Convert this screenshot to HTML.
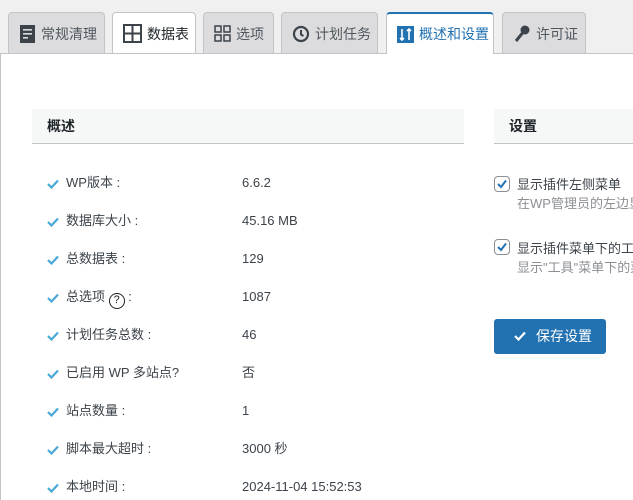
<!DOCTYPE html>
<html><head><meta charset="utf-8"><style>
*{box-sizing:border-box;margin:0;padding:0}
html,body{width:633px;height:500px;overflow:hidden}
body{background:#f0f0f1;font-family:"Liberation Sans","Noto Sans CJK SC",sans-serif;font-size:13px;color:#3c434a;position:relative}
.tab{position:absolute;top:12px;height:42px;background:#dcdcde;border:1px solid #c3c4c7;border-bottom:none;border-radius:4px 4px 0 0;display:flex;align-items:center;padding-left:10px;font-size:14px;color:#50575e;white-space:nowrap}
.tab svg{margin-right:5px;flex:none}
.content{position:absolute;left:0;top:53px;width:633px;height:447px;background:#fff;border-top:1px solid #c3c4c7;border-left:1px solid #c3c4c7}
.hdr{position:absolute;top:109px;height:35px;background:#f6f7f7;border-bottom:1px solid #c3c4c7;font-weight:bold;font-size:14px;color:#1d2327;padding-left:15px;line-height:35px}
.row{position:absolute;left:47px;height:20px;line-height:20px;color:#3c434a}
.row .v{position:absolute;left:195px;white-space:nowrap}
.row .l{position:absolute;left:19px;white-space:nowrap}
.ck{position:absolute;left:0;top:6px}
.cb{position:absolute;left:494px;width:16px;height:16px;border:1px solid #8c8f94;border-radius:4px;background:#fff}
.st{position:absolute;left:517px;white-space:nowrap;font-size:13px}
.ds{color:#8c8f94}
</style></head><body>
<div class="tab" style="left:8px;width:97px"><svg width="17" height="20"><rect x="1" y="1" width="15" height="18" fill="#3c434a"/><rect x="4" y="5" width="9" height="1.6" fill="#dcdcde"/><rect x="4" y="9" width="9" height="1.6" fill="#dcdcde"/><rect x="4" y="13" width="5" height="1.6" fill="#dcdcde"/></svg>常规清理</div>
<div class="tab" style="left:112px;width:84px;background:#fff"><svg width="19" height="19"><rect x="1" y="1" width="17" height="17" fill="none" stroke="#3c434a" stroke-width="2"/><path d="M9.5 1V18M1 9.5H18" stroke="#3c434a" stroke-width="2"/></svg><span style="color:#1d2327">数据表</span></div>
<div class="tab" style="left:203px;width:71px"><svg width="17" height="17" fill="none" stroke="#3c434a" stroke-width="1.5"><rect x="1" y="1" width="6" height="6"/><rect x="10" y="1" width="6" height="6"/><rect x="1" y="10" width="6" height="6"/><rect x="10" y="10" width="6" height="6"/></svg>选项</div>
<div class="tab" style="left:281px;width:97px"><svg width="18" height="18"><circle cx="9" cy="9" r="7" fill="none" stroke="#3c434a" stroke-width="2.2"/><path d="M9 5V9.5L11.5 11" stroke="#3c434a" stroke-width="2" fill="none"/></svg>计划任务</div>
<div class="tab" style="left:386px;width:108px;background:#fff;border-top:2px solid #2271b1;z-index:2"><svg width="17" height="17"><rect width="17" height="17" fill="#2271b1"/><path d="M5 3V14M3 12L5 14L7 12M12 14V3M10 5L12 3L14 5" stroke="#fff" stroke-width="1.6" fill="none"/></svg><span style="color:#2271b1">概述和设置</span></div>
<div class="tab" style="left:502px;width:84px"><svg width="18" height="19"><circle cx="12" cy="6" r="4.5" fill="#3c434a"/><path d="M9.5 9L3 17" stroke="#3c434a" stroke-width="3"/></svg>许可证</div>
<div class="content"></div>
<div class="hdr" style="left:32px;width:432px">概述</div>
<div class="hdr" style="left:494px;width:139px">设置</div>
<div class="row" style="top:173px"><svg class="ck" width="12" height="10"><path d="M1 5L4.5 8.5L11 1.5" stroke="#4aa8d8" stroke-width="2.2" fill="none"/></svg><span class="l">WP版本 :</span><span class="v">6.6.2</span></div>
<div class="row" style="top:211px"><svg class="ck" width="12" height="10"><path d="M1 5L4.5 8.5L11 1.5" stroke="#4aa8d8" stroke-width="2.2" fill="none"/></svg><span class="l">数据库大小 :</span><span class="v">45.16 MB</span></div>
<div class="row" style="top:249px"><svg class="ck" width="12" height="10"><path d="M1 5L4.5 8.5L11 1.5" stroke="#4aa8d8" stroke-width="2.2" fill="none"/></svg><span class="l">总数据表 :</span><span class="v">129</span></div>
<div class="row" style="top:287px"><svg class="ck" width="12" height="10"><path d="M1 5L4.5 8.5L11 1.5" stroke="#4aa8d8" stroke-width="2.2" fill="none"/></svg><span class="l">总选项 <span style="display:inline-block;width:16px;height:16px;border:1.5px solid #1d2327;border-radius:50%;font-size:11px;line-height:13px;text-align:center;color:#1d2327;vertical-align:-2px">?</span> :</span><span class="v">1087</span></div>
<div class="row" style="top:325px"><svg class="ck" width="12" height="10"><path d="M1 5L4.5 8.5L11 1.5" stroke="#4aa8d8" stroke-width="2.2" fill="none"/></svg><span class="l">计划任务总数 :</span><span class="v">46</span></div>
<div class="row" style="top:363px"><svg class="ck" width="12" height="10"><path d="M1 5L4.5 8.5L11 1.5" stroke="#4aa8d8" stroke-width="2.2" fill="none"/></svg><span class="l">已启用 WP 多站点?</span><span class="v">否</span></div>
<div class="row" style="top:401px"><svg class="ck" width="12" height="10"><path d="M1 5L4.5 8.5L11 1.5" stroke="#4aa8d8" stroke-width="2.2" fill="none"/></svg><span class="l">站点数量 :</span><span class="v">1</span></div>
<div class="row" style="top:439px"><svg class="ck" width="12" height="10"><path d="M1 5L4.5 8.5L11 1.5" stroke="#4aa8d8" stroke-width="2.2" fill="none"/></svg><span class="l">脚本最大超时 :</span><span class="v">3000 秒</span></div>
<div class="row" style="top:477px"><svg class="ck" width="12" height="10"><path d="M1 5L4.5 8.5L11 1.5" stroke="#4aa8d8" stroke-width="2.2" fill="none"/></svg><span class="l">本地时间 :</span><span class="v">2024-11-04 15:52:53</span></div>
<div class="cb" style="top:176px"><svg width="14" height="14" style="position:absolute;left:0;top:0"><path d="M3 7L6 10L11 3.5" stroke="#2271b1" stroke-width="2" fill="none"/></svg></div>
<div class="st" style="top:174px">显示插件左侧菜单</div>
<div class="st ds" style="top:193px">在WP管理员的左边显示菜单</div>
<div class="cb" style="top:239px"><svg width="14" height="14" style="position:absolute;left:0;top:0"><path d="M3 7L6 10L11 3.5" stroke="#2271b1" stroke-width="2" fill="none"/></svg></div>
<div class="st" style="top:238px">显示插件菜单下的工具</div>
<div class="st ds" style="top:257px">显示"工具"菜单下的菜单</div>
<div style="position:absolute;left:494px;top:319px;width:112px;height:35px;background:#2271b1;border-radius:3px;color:#fff;font-size:14px;line-height:35px;padding-left:20px;white-space:nowrap"><svg width="12" height="10" style="margin-right:10px"><path d="M1 5L4.5 8.5L11 1.5" stroke="#fff" stroke-width="2.2" fill="none"/></svg>保存设置</div>
</body></html>
